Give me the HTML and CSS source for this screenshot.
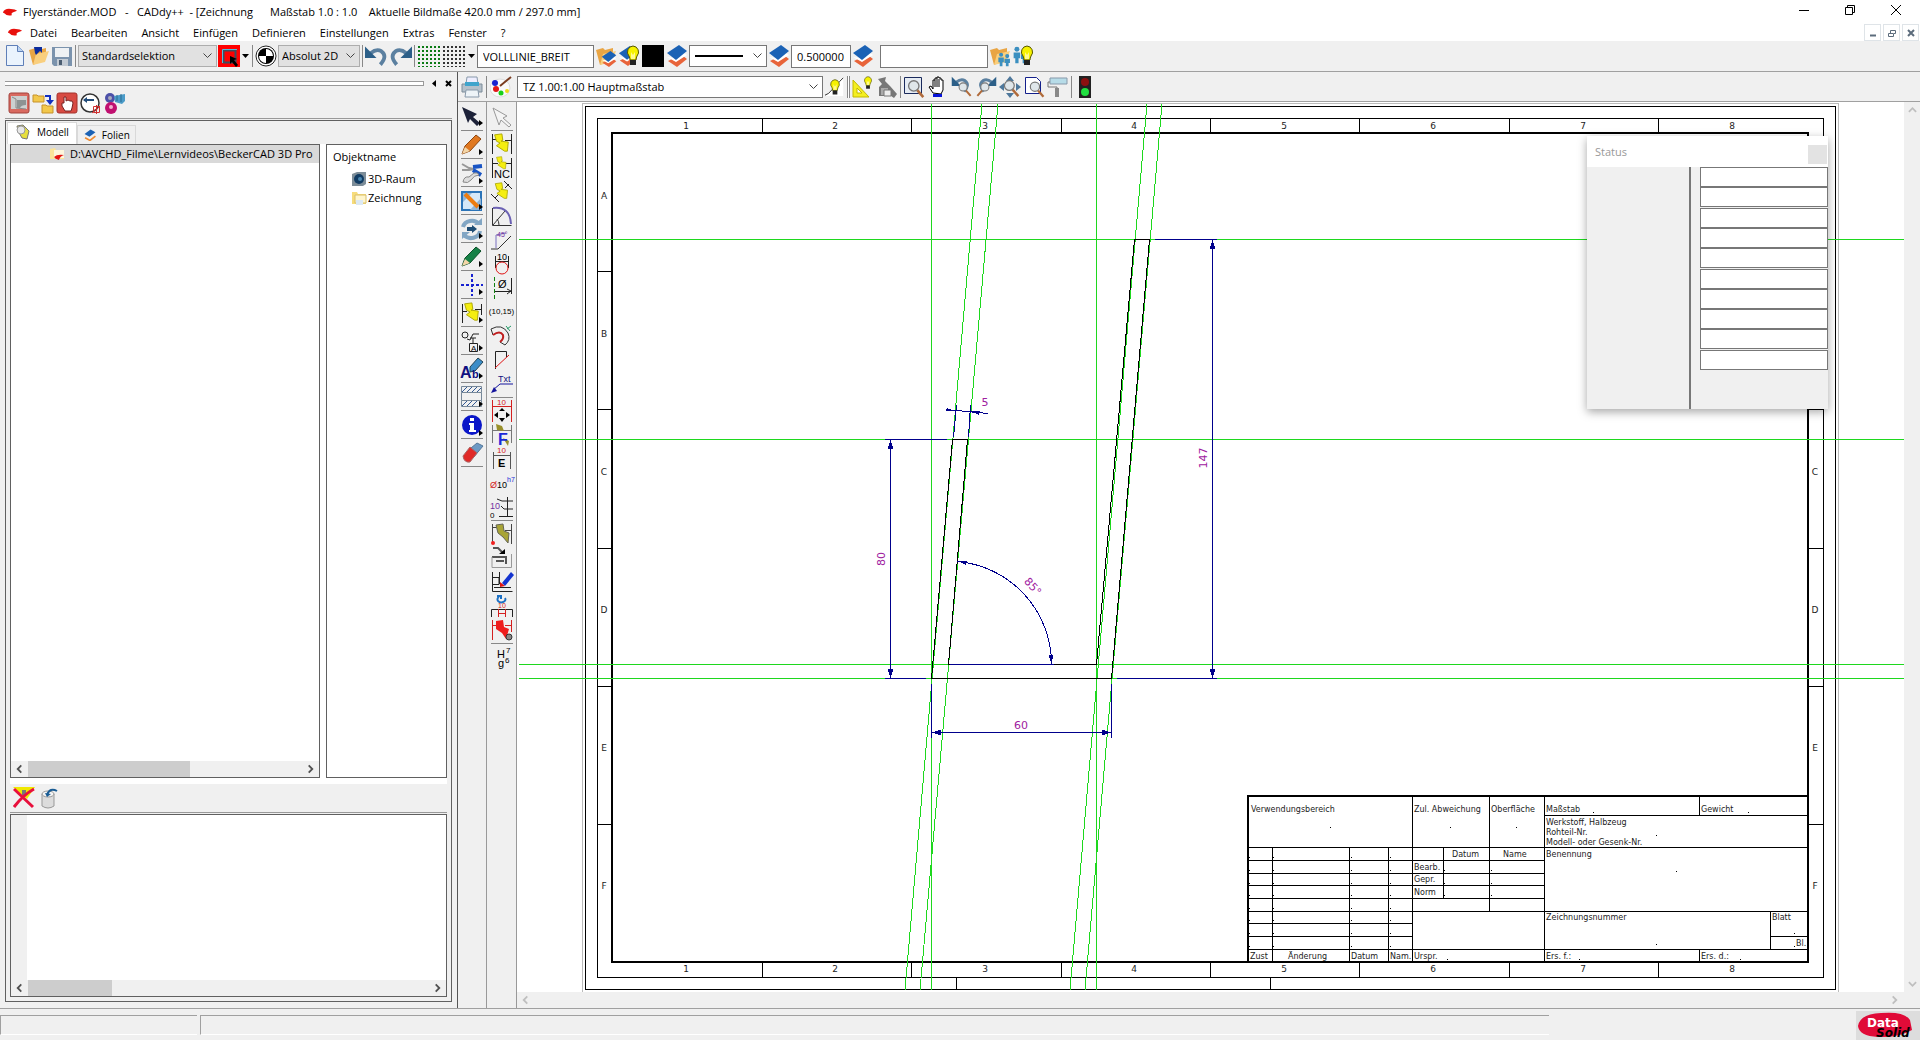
FILE: index.html
```
<!DOCTYPE html>
<html lang="de">
<head>
  <meta charset="UTF-8">
  <meta name="viewport" content="width=device-width, initial-scale=1.0">
  <title>Flyerständer.MOD - CADdy++</title>
  <link rel="stylesheet" href="styles.css">
</head>
<body>

<!-- shared symbols -->
<svg class="defs" aria-hidden="true">
  <symbol id="swoosh" viewBox="0 0 18 10"><path d="M1 5Q3 0 10 1Q15 1 17 3L12 5Q10 6 11 8Q5 9 3 6Z" fill="#e8100c"/></symbol>
  <symbol id="layer" viewBox="0 0 22 22"><path d="M2 16l9 6 10-8-4-3-8 5-3-2z" fill="#e8643a"/><path d="M1 12l9 5 11-7-3-2-9 5z" fill="#fff"/><path d="M1 8L13 0l8 6-11 9z" fill="#1b62b5"/></symbol>
  <symbol id="bulb" viewBox="0 0 14 22"><path d="M7 1a6 6 0 0 1 4 10q-1 2-1 4H4q0-2-1-4A6 6 0 0 1 7 1z" fill="#f6f200" stroke="#555500"/><path d="M4 15h6v5H4z" fill="#222"/><path d="M5 7l2 3 2-3v7H5z" fill="#fffa90"/></symbol>
  <symbol id="folder" viewBox="0 0 22 22"><path d="M1 5l7-2 2 2 8-2v11L5 20z" fill="#e9a544"/><path d="M5 20L8 9l13-3-4 11z" fill="#f9cf7e"/></symbol>
  <symbol id="glass" viewBox="0 0 22 22"><path d="M13 13l7 8" stroke="#b06a3a" stroke-width="3"/><circle cx="9" cy="8" r="6" fill="#dfe6ea" stroke="#777" stroke-width="1.5"/></symbol>
  <symbol id="flash" viewBox="0 0 22 22"><path d="M4 2l8-1 1 7-2 1 8 1-1 10-3 0-9-6 4-3-4-2z" fill="#f5ee10" stroke="#aaa500"/></symbol>
  <symbol id="undo" viewBox="0 0 24 22"><path d="M6 8Q12 3 17 6Q24 11 16 20" fill="none" stroke="#5b80a0" stroke-width="4"/><path d="M0 1v12h12z" fill="#2c5f88"/></symbol>
  <symbol id="more" viewBox="0 0 4 6"><path d="M0 0l4 3-4 3z"/></symbol>
  <symbol id="left" viewBox="0 0 10 10"><path d="M7 1L3 5l4 4" fill="none" stroke="currentColor" stroke-width="2"/></symbol>
  <symbol id="right" viewBox="0 0 10 10"><path d="M3 1l4 4-4 4" fill="none" stroke="currentColor" stroke-width="2"/></symbol>
  <symbol id="persons" viewBox="0 0 22 22"><g fill="#3b8fc0"><circle cx="6" cy="4" r="3"/><path d="M2 8h8v7H8v6H4v-6H2z"/><circle cx="15" cy="6" r="3"/><path d="M11 10h8v6h-2v5h-4v-5h-2z"/></g></symbol>
</svg>

<header class="titlebar">
  <svg class="logo"><use href="#swoosh"/></svg>
  <h1>Flyerständer.MOD   -   CADdy++  - [Zeichnung      Maßstab 1.0 : 1.0    Aktuelle Bildmaße 420.0 mm / 297.0 mm]</h1>
  <div class="window-buttons">
    <button aria-label="Minimieren"><svg width="12" height="12"><path d="M1 6.500h10" stroke="#000"/></svg></button>
    <button aria-label="Verkleinern"><svg width="12" height="12"><path d="M1.500 3.500h7v7h-7zM3.500 3V1.500h7v7H9" fill="none" stroke="#000"/></svg></button>
    <button aria-label="Schließen"><svg width="12" height="12"><path d="M1 1l10 10M11 1L1 11" stroke="#000"/></svg></button>
  </div>
</header>

<nav class="menubar">
  <svg class="logo"><use href="#swoosh"/></svg>
  <a href="#">Datei</a>
  <a href="#">Bearbeiten</a>
  <a href="#">Ansicht</a>
  <a href="#">Einfügen</a>
  <a href="#">Definieren</a>
  <a href="#">Einstellungen</a>
  <a href="#">Extras</a>
  <a href="#">Fenster</a>
  <a href="#">?</a>
  <div class="child-buttons">
    <button aria-label="Fenster minimieren"><svg width="10" height="10"><path d="M2 7.500h6" stroke="#5c6c7c" stroke-width="2"/></svg></button>
    <button aria-label="Fenster verkleinern"><svg width="10" height="10"><path d="M1.500 5.500h5v3h-5zM3.500 5V2.500h5v3H7" fill="none" stroke="#5c6c7c"/></svg></button>
    <button aria-label="Fenster schließen"><svg width="10" height="10"><path d="M2 2l6 6M8 2L2 8" stroke="#5c6c7c" stroke-width="2"/></svg></button>
  </div>
</nav>

<div class="toolbar toolbar-main">
  <button class="tool" aria-label="Neu"><svg viewBox="0 0 22 22"><path d="M1.500.500h11l6 6v14h-17z" fill="#eaf3fd" stroke="#5f7fb8"/><path d="M12.500.500v6h6" fill="#bcd4f2" stroke="#5f7fb8"/></svg></button>
  <button class="tool" aria-label="Öffnen"><svg viewBox="0 0 22 22"><use href="#folder"/><path d="M7 8L6 2h8v6l-2-2-4 4z" fill="#0c2c9c"/></svg></button>
  <button class="tool" aria-label="Speichern"><svg viewBox="0 0 22 22"><path d="M1 2h20v19H3l-2-2z" fill="#7b93ad"/><path d="M4 3h14v9H4z" fill="#eef1f4"/><path d="M6 14h11v7H6z" fill="#c3cbd4"/><path d="M8 15h3v5H8z" fill="#4c5e72"/></svg></button>
  <span class="sep"></span>
  <select class="combo combo-selection" aria-label="Selektion"><option>Standardselektion</option></select>
  <button class="tool" aria-label="Auswahlrahmen"><svg viewBox="0 0 22 22"><path d="M0 0h22v22H0z" fill="#f00"/><path d="M5.500 5.500h12v12h-12z" fill="none" stroke="#3a5060" stroke-width="2"/><path d="M4.500 18V4.500H19" fill="none" stroke="#5bd"/><path d="M12 11l7 3-3 1 4 5-2 2-4-5-2 2z"/></svg></button>
  <button class="caret" aria-label="Auswahl"><svg width="7" height="5"><path d="M0 0h7L3.500 4z"/></svg></button>
  <span class="sep"></span>
  <button class="tool" aria-label="Koordinaten"><svg viewBox="0 0 22 22"><circle cx="11" cy="11" r="10" fill="#fff" stroke="#222"/><circle cx="11" cy="11" r="8"/><path d="M11 11V4A7 7 0 0 1 18 11zM11 11v7a7 7 0 0 1-7-7z" fill="#fff"/></svg></button>
  <select class="combo combo-mode" aria-label="Koordinatenmodus"><option>Absolut 2D</option></select>
  <span class="sep"></span>
  <button class="tool wide" aria-label="Rückgängig"><svg viewBox="0 0 24 22"><use href="#undo"/></svg></button>
  <button class="tool wide flip" aria-label="Wiederholen"><svg viewBox="0 0 24 22"><use href="#undo"/></svg></button>
  <span class="sep"></span>
  <button class="grid-button grid-green" aria-label="Raster"></button>
  <button class="grid-button" aria-label="Fangraster"></button>
  <button class="caret" aria-label="Rasterauswahl"><svg width="7" height="5"><path d="M0 0h7L3.500 4z"/></svg></button>
  <input class="field field-line" type="text" value="VOLLLINIE_BREIT" aria-label="Linienart">
  <button class="tool" aria-label="Folie wählen"><svg viewBox="0 0 22 22"><use href="#folder"/><use href="#layer" x="6" y="6" width="16" height="16"/></svg></button>
  <button class="tool" aria-label="Folie sichtbar"><svg viewBox="0 0 22 22"><use href="#layer" width="20" height="22"/><use href="#bulb" x="8" width="14" height="22"/></svg></button>
  <button class="tool swatch" aria-label="Farbe"></button>
  <button class="tool" aria-label="Farbe aus Folie"><svg viewBox="0 0 22 22"><use href="#layer"/></svg></button>
  <select class="combo combo-line" aria-label="Strichart"><option></option></select>
  <button class="tool" aria-label="Strichart aus Folie"><svg viewBox="0 0 22 22"><use href="#layer"/></svg></button>
  <input class="field field-width" type="text" value="0.500000" aria-label="Strichbreite">
  <button class="tool" aria-label="Breite aus Folie"><svg viewBox="0 0 22 22"><use href="#layer"/></svg></button>
  <input class="field field-group" type="text" aria-label="Gruppe">
  <button class="tool" aria-label="Gruppe wählen"><svg viewBox="0 0 22 22"><use href="#folder"/><use href="#persons" x="8" y="7" width="15" height="15"/></svg></button>
  <button class="tool" aria-label="Gruppe sichtbar"><svg viewBox="0 0 22 22"><use href="#persons" width="18" height="20"/><use href="#bulb" x="8" width="14" height="22"/></svg></button>
</div>

<main class="workspace">
  <aside class="dock">
    <div class="grip">
      <span class="grip-line"></span>
      <button aria-label="Einklappen"><svg width="5" height="7"><path d="M4 0v7L0 3.500z"/></svg></button>
      <button aria-label="Leiste schließen"><svg width="7" height="7"><path d="M1 1l5 5M6 1L1 6" stroke="#000" stroke-width="2"/></svg></button>
    </div>
    <div class="dock-tools">
      <button class="tool" aria-label="Bauteil"><svg viewBox="0 0 22 22"><rect x="1" y="1" width="20" height="20" rx="2" fill="#d96a60" stroke="#a3423c"/><path d="M3 4h16v13H3z" fill="#ccd0d0"/><path d="M4 5l4 2v9l10 1" fill="none" stroke="#888"/><path d="M9 8h9v5q-5 0-6 3H9z" fill="#8d9393"/></svg></button>
      <button class="tool" aria-label="Ordner tauschen"><svg viewBox="0 0 22 22"><path d="M1 3h4l1 1h6v6H1zM10 13h4l1 1h6v7H10z" fill="#f2c84c" stroke="#c6922a"/><path d="M13 4h5v5" fill="none" stroke="#1230c0" stroke-width="2"/><path d="M14 8h8l-4 5z" fill="#1230c0"/></svg></button>
      <button class="tool" aria-label="Hand"><svg viewBox="0 0 22 22"><rect x="1" y="1" width="20" height="20" rx="2" fill="#d84a42" stroke="#a3322c"/><path d="M6 11l2 0V5h2v4l2-1 2 1 2 0 1 2-1 5-1 3H9l-3-5z" fill="#fff" stroke="#722"/></svg></button>
      <button class="tool" aria-label="Drehen"><svg viewBox="0 0 22 22"><circle cx="10" cy="11" r="9" fill="#fff" stroke="#333" stroke-width="1.500"/><path d="M4 8h10" stroke="#234d7a" stroke-width="2"/><path d="M3 8l4-3v6z" fill="#234d7a"/><path d="M13.500 14.500h6v6h-6zM12 21l8-7M16.500 13v9" fill="none" stroke="#d03030"/></svg></button>
      <button class="tool" aria-label="Baugruppe"><svg viewBox="0 0 22 22"><circle cx="6" cy="6" r="5" fill="#4c50a8"/><circle cx="7" cy="16" r="6" fill="#c01070"/><circle cx="7" cy="15" r="2" fill="#f4b0d0"/><circle cx="6" cy="6" r="2" fill="#aab"/><path d="M10 4l11-2v7l-3 3-7-2z" fill="#4b9bc8"/><path d="M13 3v6M17 2v8" stroke="#2a6a90"/></svg></button>
    </div>
    <div class="dock-box">
      <div class="tabs">
        <button class="tab active"><svg width="16" height="16"><path d="M2 2l6-1 6 6-2 8-5-1-4-7z" fill="#e6df3c" stroke="#777"/><circle cx="6" cy="6" r="4" fill="#e7e7e7" stroke="#999"/></svg>Modell</button>
        <button class="tab"><svg width="12" height="12" viewBox="0 0 22 22"><path d="M2 16l9 5 10-8" fill="none" stroke="#ee8a30" stroke-width="3"/><path d="M1 9L12 1l9 5-11 8z" fill="#1b62b5"/></svg>Folien</button>
      </div>
      <div class="lists">
        <div class="list tree">
          <div class="tree-row"><svg width="16" height="14"><path d="M1 2l5-1 1 2h8v9H1z" fill="#fbe49a"/><path d="M5 3h10v8H5z" fill="#fdf6dc"/><path d="M5 10q3-3 10-2-4 1-5 5-4-1-5-3z" fill="#e31414"/></svg>D:\AVCHD_Filme\Lernvideos\BeckerCAD 3D Pro</div>
          <div class="list-space"></div>
          <div class="scroll-x">
            <button aria-label="Nach links"><svg><use href="#left"/></svg></button>
            <div class="track"><span class="thumb thumb-tree"></span></div>
            <button aria-label="Nach rechts"><svg><use href="#right"/></svg></button>
          </div>
        </div>
        <div class="list objects">
          <p>Objektname</p>
          <ul>
            <li><svg width="16" height="16"><path d="M1 3l5-2h9v12l-3 2H1z" fill="#7d8d98"/><circle cx="8" cy="8" r="5" fill="#123c63"/><circle cx="9" cy="8" r="2" fill="#4b87b0"/></svg>3D-Raum</li>
            <li><svg width="16" height="16"><path d="M1 2h5l1 2h8v10H1z" fill="#f7dc7a"/><path d="M4 5h11v8H4z" fill="#fff5cc" stroke="#d9bf6a"/><path d="M5 10h7v5H5z" fill="#dce9f4"/></svg>Zeichnung</li>
          </ul>
        </div>
      </div>
      <div class="message-tools">
        <button class="tool" aria-label="Auswahl löschen"><svg viewBox="0 0 22 22"><path d="M0 0h22l-8 12z" fill="#f0e800"/><path d="M9 3h4v5H9z" fill="#777"/><path d="M1 2l19 18M21 2Q10 8 1 20" stroke="#e8103c" stroke-width="3" fill="none"/></svg></button>
        <button class="tool" aria-label="Leeren"><svg viewBox="0 0 22 22"><path d="M2 7v12q6 4 12 0V7z" fill="#dcdcdc" stroke="#999"/><ellipse cx="8" cy="7" rx="6" ry="3" fill="#f5f5f5" stroke="#999"/><path d="M17 4q-7-4-10 4" fill="none" stroke="#1a5c94" stroke-width="2"/><path d="M5 6l6 1-4 3z" fill="#1a5c94"/></svg></button>
      </div>
      <div class="list messages">
        <div class="gutter"></div>
        <div class="scroll-x">
          <button aria-label="Meldungen nach links"><svg><use href="#left"/></svg></button>
          <div class="track"><span class="thumb thumb-messages"></span></div>
          <button aria-label="Meldungen nach rechts"><svg><use href="#right"/></svg></button>
        </div>
      </div>
    </div>
  </aside>

  <section class="editor">
    <div class="toolbar toolbar-view">
      <button class="tool" aria-label="Drucken"><svg viewBox="0 0 22 22"><path d="M6 1h10l1 7H5z" fill="#eef" stroke="#89a"/><path d="M1 8h20v8H1z" fill="#b4c0ca" stroke="#7c8c99"/><path d="M4 6h14v4H4z" fill="#3fa4cc"/><path d="M5 14h12l1 7H4z" fill="#eef4f8" stroke="#89a"/></svg></button>
      <span class="sep spaced"></span>
      <button class="tool" aria-label="Farben"><svg viewBox="0 0 22 22"><ellipse cx="10" cy="12" rx="10" ry="9" fill="#fafafa" stroke="#ddd"/><circle cx="5" cy="7" r="3" fill="#1822d0"/><circle cx="6" cy="13" r="3" fill="#e01818"/><circle cx="11" cy="17" r="2.500" fill="#18d018"/><circle cx="17" cy="15" r="2" fill="#eeda18"/><path d="M10 10l11-9" stroke="#7a3c20" stroke-width="2"/></svg></button>
      <select class="combo combo-scale" aria-label="Teilzeichnung"><option>TZ 1.00:1.00 Hauptmaßstab</option></select>
      <button class="tool light" aria-label="Licht"><svg viewBox="0 0 22 22"><path d="M1 21l4-5L16 3l4-2v20z" fill="#fff"/><path d="M0 20l4-2L16 5l4-4" fill="none" stroke="#222"/><use href="#bulb" x="5" y="2" width="12" height="19"/></svg></button>
      <span class="sep double"></span>
      <button class="tool" aria-label="Winkel"><svg viewBox="0 0 22 22"><path d="M1 4v17h16z" fill="#f4ee20" stroke="#c2b800"/><path d="M5 12v5h5z" fill="#fff" stroke="#c2b800"/><use href="#bulb" x="11" width="10" height="14"/></svg></button>
      <button class="tool" aria-label="Schablone"><svg viewBox="0 0 22 22"><path d="M2 3l8-2-1 4 5 5 7 8-3 4-6-4-3 2H3v-9l3-3z" fill="#777"/><path d="M5 12h7v7H5z" fill="#aaa"/><path d="M8 14h7v6H8z" fill="#eee" stroke="#777"/></svg></button>
      <span class="sep"></span>
      <button class="tool" aria-label="Zoomfenster"><svg viewBox="0 0 22 22"><path d="M1.500 1.500h17v16h-17z" fill="#e5ebf2" stroke="#1a2a5c"/><use href="#glass" x="3" y="3" width="19" height="19"/></svg></button>
      <button class="tool" aria-label="Verschieben"><svg viewBox="0 0 22 22"><path d="M6 17l-4-6 2-1 2 3V4h2V2h2V1h2v1h2v2h2v10l-2 4z" fill="#fff" stroke="#000"/><path d="M8 4v7M10 2v9M12 3v8" stroke="#000"/><path d="M6 18h9v3H6z" fill="#0814d8"/></svg></button>
      <button class="tool" aria-label="Zoom zurück"><svg viewBox="0 0 22 22"><use href="#undo" width="20" height="17"/><use href="#glass" x="6" y="5" width="15" height="16"/></svg></button>
      <button class="tool flip" aria-label="Zoom vor"><svg viewBox="0 0 22 22"><use href="#undo" width="20" height="17"/><use href="#glass" x="6" y="5" width="15" height="16"/></svg></button>
      <button class="tool" aria-label="Alles zeigen"><svg viewBox="0 0 22 22"><path d="M11 0l4 5H7zM11 22l4-5H7zM0 11l5-4v8zM22 11l-5-4v8z" fill="#4e789c"/><use href="#glass" x="3" y="3" width="18" height="18"/></svg></button>
      <button class="tool" aria-label="Blatt zeigen"><svg viewBox="0 0 22 22"><path d="M2.500 1.500h11l4 4v12h-15z" fill="#fff" stroke="#14208c"/><use href="#glass" x="5" y="4" width="17" height="18"/></svg></button>
      <button class="tool" aria-label="Neu zeichnen"><svg viewBox="0 0 22 22"><path d="M3 2h17v6H3z" fill="#b7dce8" stroke="#89a"/><path d="M3 6H1v5h9v3" fill="none" stroke="#777"/><path d="M8 12h4v9H8z" fill="#888"/></svg></button>
      <span class="sep"></span>
      <button class="tool" aria-label="Ampel"><svg viewBox="0 0 22 22"><path d="M5 0h12v22H5z" fill="#222"/><circle cx="11" cy="6" r="4" fill="#8c1010"/><circle cx="11" cy="16" r="4" fill="#20e040"/></svg></button>
    </div>

    <div class="editor-body">
      <div class="palette palette-main">
        <button aria-label="Selektieren"><svg viewBox="0 0 22 22"><path d="M1 1l15 7-4 3 7 6-3 3-7-7-2 4z" fill="#1c2138"/><use href="#more" x="18" y="14" width="4" height="6"/></svg></button>
        <button aria-label="Zeichnen"><svg viewBox="0 0 22 22"><path d="M1 20l3-8L15 1l5 4L9 17z" fill="#e07820" stroke="#8c4610"/><path d="M1 20l3-7 5 4z" fill="#f3d6a8"/><use href="#more" x="18" y="15" width="4" height="6"/></svg></button>
        <button aria-label="Ändern"><svg viewBox="0 0 22 22"><path d="M1 2l7 4 5 1M1 8l7 0 5-1" fill="none" stroke="#999" stroke-width="2"/><path d="M12 5l9-1M12 8l8 5" stroke="#1854c4" stroke-width="4"/><path d="M2 20q1-6 6-5l5-4q4-1 5 2-5 0-8 5-3 4-8 2z" fill="#ddd" stroke="#888"/><use href="#more" x="18" y="16" width="4" height="6"/></svg></button>
        <button aria-label="Konstruktion"><svg viewBox="0 0 22 22"><path d="M1 2h19v18H1z" fill="#d5e8f8" stroke="#2b74b8" stroke-width="2"/><path d="M2 3h9l-9 9zM20 8v12H9z" fill="#8fb4d6"/><path d="M4 4l13 13" stroke="#ec7c10" stroke-width="4"/><use href="#more" x="18" y="14" width="4" height="6"/></svg></button>
        <button aria-label="Transformieren"><svg viewBox="0 0 22 22"><path d="M2 9a9 8 0 0 1 16-3M19 13a9 8 0 0 1-16 4" fill="none" stroke="#82a6c4" stroke-width="4"/><path d="M13 7h8V0zM1 21v-7h8z" fill="#82a6c4"/><path d="M6 9h5V7l5 4-5 4v-2H6z" fill="#1d4c74"/><use href="#more" x="18" y="15" width="4" height="6"/></svg></button>
        <button aria-label="Markieren"><svg viewBox="0 0 22 22"><path d="M1 20l3-8L15 1l5 4L9 17z" fill="#158046" stroke="#0b5028"/><path d="M1 20l3-7 5 4z" fill="#f3d6a8"/><use href="#more" x="18" y="15" width="4" height="6"/></svg></button>
        <button aria-label="Punkte"><svg viewBox="0 0 22 22"><path d="M0 11h22M11 0v22" stroke="#1822d0" stroke-width="2" stroke-dasharray="3 2"/><use href="#more" x="18" y="15" width="4" height="6"/></svg></button>
        <button aria-label="Bemaßung"><svg viewBox="0 0 22 22"><path d="M1.500 2v19M20.500 2v11M1 9.500h5M14 7.500h6" stroke="#222"/><use href="#flash" width="20" height="20"/><use href="#more" x="18" y="15" width="4" height="6"/></svg></button>
        <button aria-label="Symbole"><svg viewBox="0 0 22 22"><circle cx="4" cy="5" r="3" fill="none" stroke="#222"/><path d="M6 9l3 1 3-6h6M12 8v5M9 8h6" fill="none" stroke="#222"/><path d="M8.500 13.500h8v8h-8z" fill="none" stroke="#222"/><text x="10" y="21" class="t8">A</text><use href="#more" x="18" y="15" width="4" height="6"/></svg></button>
        <button aria-label="Text"><svg viewBox="0 0 22 22"><text x="-1" y="20" class="t15 navy">A</text><path d="M9 9l8-9 5 4-8 9-5 1z" fill="#3b8dc8" stroke="#245"/><text x="11" y="20" class="t10 navy">b</text><use href="#more" x="18" y="15" width="4" height="6"/></svg></button>
        <button aria-label="Schraffur"><svg viewBox="0 0 22 22"><path d="M.500.500h20v6H.500zM.500 14.500h20v6H.500zM.500 6.500v8M20.500 6.500v8" fill="none" stroke="#789"/><path d="M1 6l5-5M6 6l5-5M11 6l5-5M16 6l4-4M1 20l5-5M6 20l5-5M11 20l5-5" stroke="#345a94"/><use href="#more" x="18" y="15" width="4" height="6"/></svg></button>
        <button aria-label="Information"><svg viewBox="0 0 22 22"><circle cx="11" cy="11" r="10" fill="#0a16c8"/><path d="M9 4h4v3H9zM8 9h5v7h2v2H8v-2h1v-5H8z" fill="#fff"/><use href="#more" x="18" y="16" width="4" height="6"/></svg></button>
        <button aria-label="Radieren"><svg viewBox="0 0 22 22"><path d="M10 6l6-5 6 3-10 12z" fill="#6d9ac4" stroke="#579"/><path d="M2 14l7-9 7 6-7 9q-6 1-7-6z" fill="#e02a28" stroke="#a66"/></svg></button>
      </div>

      <div class="palette palette-dims">
        <button aria-label="Auswahl"><svg viewBox="0 0 22 22"><path d="M2 2l14 8-4 2 8 7-2 2-8-7-2 5z" fill="#f4f4f4" stroke="#999"/></svg></button>
        <span class="rule"></span>
        <button aria-label="Maß"><svg viewBox="0 0 22 22"><path d="M1.500 1v20M20.500 1v20M1 6.500h6M14 7.500h6" stroke="#222"/><use href="#flash" width="20" height="20"/></svg></button>
        <button aria-label="NC-Maß"><svg viewBox="0 0 22 22"><path d="M1.500 1v20M20.500 1v20M1 6.500h6M14 6.500h6" stroke="#222"/><use href="#flash" x="2" y="-1" width="16" height="14"/><text x="3" y="21" class="t11">NC</text></svg></button>
        <button aria-label="Schrägmaß"><svg viewBox="0 0 22 22"><path d="M13 0l8 8M0 13l8 8M18 3l-4 4M4 17l4-4" stroke="#222"/><use href="#flash" x="1" y="0" width="18" height="20"/></svg></button>
        <button aria-label="Winkelmaß"><svg viewBox="0 0 22 22"><path d="M1.500 3v17.500h19M2 20L14 6M8 20q0-4-2-6" fill="none" stroke="#333"/><path d="M2 3q17-2 18 16" fill="none" stroke="#6c62b4" stroke-width="2"/></svg></button>
        <button aria-label="Fase"><svg viewBox="0 0 22 22"><path d="M0 20h7L20 7" fill="none" stroke="#333"/><path d="M5 19V6l10-2" fill="none" stroke="#7a70c0"/><text x="6" y="8" class="t7 violet">45°</text></svg></button>
        <button aria-label="Durchmesser"><svg viewBox="0 0 22 22"><text x="6" y="7" class="t9">10</text><path d="M4.500 3v12M17.500 3v12M4 8.500h14" stroke="#222"/><circle cx="11" cy="15" r="6" fill="none" stroke="#e01414"/></svg></button>
        <button aria-label="Durchmesser linear"><svg viewBox="0 0 22 22"><path d="M3.500 0v22" stroke="#108010" stroke-dasharray="4 2"/><text x="7" y="11" class="t11">Ø</text><path d="M20.500 1v16M4 14.500h16M16 12l4 2-4 3" fill="none" stroke="#222"/></svg></button>
        <button class="text-tool" aria-label="Koordinatenmaß">(10,15)</button>
        <button aria-label="Bogenmaß"><svg viewBox="0 0 22 22"><path d="M0 4Q11-2 17 8Q20 15 14 20l-5-3M0 4l2 6" fill="none" stroke="#333"/><path d="M2 10Q9 5 12 10Q13 14 9 17" fill="none" stroke="#c02020" stroke-width="2"/><path d="M16 4l4-3M15 1l4 5" stroke="#296"/></svg></button>
        <button aria-label="Kegelmaß"><svg viewBox="0 0 22 22"><path d="M4.500 20V2.500h11V8" fill="none" stroke="#222"/><path d="M4 19L18 6" stroke="#e01414"/></svg></button>
        <button aria-label="Hinweistext"><svg viewBox="0 0 22 22"><text x="7" y="9" class="t9 navy">Txt</text><path d="M2 17l7-6h13" fill="none" stroke="#14149c"/><path d="M0 20l3-6 3 4z" fill="#14149c"/></svg></button>
        <span class="rule"></span>
        <button aria-label="Maß verschieben"><svg viewBox="0 0 22 22"><path d="M1.500 0v22M20.500 0v22M1 6.500h20" stroke="#d42020"/><text x="6" y="5" class="t8 red">10</text><path d="M11 8l3 3H8zM11 22l3-4H8zM3 15l4-3v6zM19 15l-4-3v6z"/></svg></button>
        <button aria-label="Maß formatieren"><svg viewBox="0 0 22 22"><path d="M1.500 1v18M20.500 1v18M1 6.500h19" stroke="#777"/><path d="M5 0l6 2 2 5-7-1zM12 14l6 3-1 5z" fill="#98902c"/><text x="7" y="21" class="t15 blue">F</text></svg></button>
        <button aria-label="Maß editieren"><svg viewBox="0 0 22 22"><text x="6" y="5" class="t8 red">10</text><path d="M2.500 4v17M19.500 4v17M3 7.500h16" stroke="#555"/><text x="7" y="19" class="t11 bold">E</text></svg></button>
        <button aria-label="Passung h7"><svg viewBox="0 0 22 22"><text x="-1" y="16" class="t9 red">Ø</text><text x="6" y="16" class="t9">10</text><text x="16" y="10" class="t7 blue">h7</text></svg></button>
        <button aria-label="Staffelmaß"><svg viewBox="0 0 22 22"><text x="-1" y="13" class="t9 violet">10</text><text x="-1" y="22" class="t8">0</text><path d="M6 3l5 2h11M10 10l3 3h9M8 20.500h14M16.500 1v20" fill="none" stroke="#222"/></svg></button>
        <span class="rule"></span>
        <button aria-label="Maß anhängen"><svg viewBox="0 0 22 22"><path d="M1.500 1v20M20.500 1v20M1 4.500h6M14 7.500h6" stroke="#444"/><path d="M5 2l7-1 1 7 5 2-1 10-5-6-5-4z" fill="#a8a436" stroke="#665"/><circle cx="2" cy="20" r="2" fill="#f02020"/></svg></button>
        <button aria-label="Maß einfügen"><svg viewBox="0 0 22 22"><path d="M2 1h5l4 4M1 10h14v7M5 14h8" fill="none" stroke="#555" stroke-width="2"/><path d="M8 7h6V2z"/><path d="M20.500 7v13.500H1V10" fill="none" stroke="#999"/></svg></button>
        <button aria-label="Maß bearbeiten"><svg viewBox="0 0 22 22"><path d="M1.500 1v19.500h20M1 6.500h7v7H1M8.500 1v12M3 16.500h17" fill="none" stroke="#222"/><path d="M11 12L20 1l3 3-9 11z" fill="#1434d0"/><path d="M9 11l5 4-5 1z" fill="#e01414"/></svg></button>
        <button aria-label="Maß drehen"><svg viewBox="0 0 22 22"><path d="M8 2a4 3 0 1 0 6 1M6 1h4v3" fill="none" stroke="#1c70c4" stroke-width="2"/><path d="M.500 22v-7.500h21V22" fill="none" stroke="#222"/><text x="7" y="13" class="t7 red">10</text><path d="M7.500 14v8M14.500 14v8M7 18.500h7" fill="none" stroke="#d42020"/></svg></button>
        <button aria-label="Maß auflösen"><svg viewBox="0 0 22 22"><path d="M1.500 1v20M20.500 1v12M1 6.500h6M14 6.500h6" stroke="#d42020"/><path d="M5 2l7-1 1 7 5 2-3 10-4-6-6-4z" fill="#ee1c1c"/><circle cx="18" cy="18" r="3" fill="#888" stroke="#333"/></svg></button>
        <span class="rule"></span>
        <button aria-label="Passung H7 g6"><svg viewBox="0 0 22 22"><text x="6" y="12" class="t11">H</text><text x="15" y="7" class="t8">7</text><text x="7" y="21" class="t11">g</text><text x="14" y="17" class="t8">6</text></svg></button>
      </div>

      <div class="canvas">
        <svg class="drawing" viewBox="517 102 1387 890">
          <!-- sheet frames -->
          <path class="sheet" d="M582.500 992V103.500h1256V992"/>
          <g class="thin">
            <rect x="585.500" y="106.500" width="1250" height="883"/>
            <rect x="597.500" y="118.500" width="1226" height="859"/>
            <path d="M762.500 118v15M911.500 118v15M1061.500 118v15M1210.500 118v15M1359.500 118v15M1509.500 118v15M1658.500 118v15"/>
            <path d="M762.500 962v15M911.500 962v15M1061.500 962v15M1210.500 962v15M1359.500 962v15M1509.500 962v15M1658.500 962v15M956.500 977v12M1270.500 977v12"/>
            <path d="M597 271.500h15M597 409.500h15M597 548.500h15M597 686.500h15M597 824.500h15"/>
            <path d="M1808 271.500h15M1808 409.500h15M1808 548.500h15M1808 686.500h15M1808 824.500h15"/>
          </g>
          <rect class="thick" x="612" y="133" width="1196" height="829"/>
          <g class="zone">
            <text x="686" y="129">1</text><text x="835" y="129">2</text><text x="985" y="129">3</text><text x="1134" y="129">4</text><text x="1284" y="129">5</text><text x="1433" y="129">6</text><text x="1583" y="129">7</text><text x="1732" y="129">8</text>
            <text x="686" y="972">1</text><text x="835" y="972">2</text><text x="985" y="972">3</text><text x="1134" y="972">4</text><text x="1284" y="972">5</text><text x="1433" y="972">6</text><text x="1583" y="972">7</text><text x="1732" y="972">8</text>
            <text x="604" y="199">A</text><text x="604" y="337">B</text><text x="604" y="475">C</text><text x="604" y="613">D</text><text x="604" y="751">E</text><text x="604" y="889">F</text>
            <text x="1815" y="475">C</text><text x="1815" y="613">D</text><text x="1815" y="751">E</text><text x="1815" y="889">F</text>
          </g>

          <!-- construction lines -->
          <g class="guide">
            <path d="M519 239.500h1385M519 439.500h1385M519 664.500h1385M519 678.500h1385"/>
            <path d="M931.500 104v886M1096.500 104v886"/>
            <path d="M982 104L905 990M998 104L920 990M1147 104L1070 990M1162 104L1085 990"/>
          </g>

          <!-- profile -->
          <path class="part" d="M931.500 678.500L952.500 439.500H967.500L948.500 664.500H1096.500L1134.500 239.500H1149.500L1111.500 678.500Z"/>

          <!-- dimensions -->
          <g class="dim">
            <path d="M885 439.500h62M885 678.500h41M890.500 440v238"/>
            <path d="M1155 239.500h62M1117 678.500h100M1212.500 240v438"/>
            <path d="M931.500 684v54M1111.500 684v54M932 732.500h179"/>
            <path d="M956.500 405L953.500 437M970.500 405L968.500 437M946 409.500L988 413.500"/>
            <path d="M957.500 561.500A103 103 0 0 1 1051.500 664.500M950 664.500h104"/>
          </g>
          <g class="arrow">
            <path d="M890.500 440l-3 9h6zM890.500 678l-3-9h6zM1212.500 240l-3 9h6zM1212.500 678l-3-9h6z"/>
            <path d="M932 732.500l9-3v6zM1111 732.500l-9-3v6z"/>
            <path d="M958 561l9 0-1 4zM1051.500 664l-3-9h5z"/>
            <path d="M955 411l-8-3-1 3zM971 411l9 0-1 4z"/>
          </g>
          <g class="value">
            <text x="985" y="406">5</text>
            <text x="1021" y="729">60</text>
            <text transform="translate(885 559) rotate(-90)">80</text>
            <text transform="translate(1207 458) rotate(-90)">147</text>
            <text transform="translate(1030 589) rotate(48)">85°</text>
          </g>

          <!-- title block -->
          <path class="thick" d="M1808 796H1248V962"/>
          <g class="thin">
            <path d="M1544 815.500h264M1248 847.500h560M1248 860.500h296M1248 873.500h296M1248 885.500h296M1248 898.500h296M1248 911.500h560M1248 923.500h164M1248 936.500h164M1770 936.500h38M1248 949.500h560"/>
            <path d="M1272.500 847v115M1349.500 847v115M1388.500 847v115M1412.500 796v166M1443.500 847v51M1489.500 796v115M1544.500 796v166M1699.500 796v19M1699.500 949v13M1770.500 911v38"/>
          </g>
          <g class="label">
            <text x="1251" y="812">Verwendungsbereich</text>
            <text x="1414" y="812">Zul. Abweichung</text>
            <text x="1491" y="812">Oberfläche</text>
            <text x="1546" y="812">Maßstab</text>
            <text x="1701" y="812">Gewicht</text>
            <text x="1546" y="825">Werkstoff, Halbzeug</text>
            <text x="1546" y="835">Rohteil-Nr.</text>
            <text x="1546" y="845">Modell- oder Gesenk-Nr.</text>
            <text x="1546" y="857">Benennung</text>
            <text x="1452" y="857">Datum</text>
            <text x="1503" y="857">Name</text>
            <text x="1414" y="870">Bearb.</text>
            <text x="1414" y="882">Gepr.</text>
            <text x="1414" y="895">Norm</text>
            <text x="1546" y="920">Zeichnungsnummer</text>
            <text x="1772" y="920">Blatt</text>
            <text x="1796" y="946">Bl.</text>
            <text x="1250" y="959">Zust</text>
            <text x="1288" y="959">Änderung</text>
            <text x="1351" y="959">Datum</text>
            <text x="1390" y="959">Nam.</text>
            <text x="1414" y="959">Urspr.</text>
            <text x="1546" y="959">Ers. f.:</text>
            <text x="1701" y="959">Ers. d.:</text>
          </g>
          <path class="dots" d="M1330 827h1M1450 827h1M1516 827h1M1593 812h1M1748 812h1M1656 835h1M1676 871h1M1656 944h1M1794 933h1M1794 946h1M1447 959h1M1579 959h1M1740 959h1
            M1249 857h1M1249 870h1M1249 883h1M1249 895h1M1249 908h1M1249 920h1M1249 933h1M1249 946h1
            M1273 857h1M1273 870h1M1273 883h1M1273 895h1M1273 908h1M1273 920h1M1273 933h1M1273 946h1
            M1351 857h1M1351 870h1M1351 883h1M1351 895h1M1351 908h1M1351 920h1M1351 933h1M1351 946h1
            M1390 857h1M1390 870h1M1390 883h1M1390 895h1M1390 908h1M1390 920h1M1390 933h1M1390 946h1
            M1444 870h1M1444 883h1M1444 895h1M1491 870h1M1491 883h1M1491 895h1"/>
        </svg>

        <div class="status-window">
          <div class="status-title"><h2>Status</h2><button aria-label="Status schließen"></button></div>
          <div class="status-body">
            <div class="status-left"></div>
            <div class="status-fields">
              <div class="field-group-box"><input type="text" aria-label="X"><input type="text" aria-label="Y"></div>
              <div class="field-group-box"><input type="text" aria-label="dX"><input type="text" aria-label="dY"><input type="text" aria-label="dZ"></div>
              <div class="field-group-box"><input type="text" aria-label="Länge"><input type="text" aria-label="Winkel"><input type="text" aria-label="Radius"><input type="text" aria-label="Abstand"></div>
              <div class="field-group-box"><input type="text" aria-label="Fang"></div>
            </div>
          </div>
        </div>
      </div>
      <div class="scroll-y">
        <button class="turn" aria-label="Nach oben"><svg><use href="#left"/></svg></button>
        <button class="turn" aria-label="Nach unten"><svg><use href="#right"/></svg></button>
      </div>
      <div class="scroll-x canvas-scroll">
        <button aria-label="Zeichnung nach links"><svg><use href="#left"/></svg></button>
        <div class="track"></div>
        <button aria-label="Zeichnung nach rechts"><svg><use href="#right"/></svg></button>
      </div>
    </div>
  </section>
</main>

<footer class="statusbar">
  <div class="cell cell-hint"></div>
  <div class="cell cell-message"></div>
  <svg class="brand" viewBox="0 0 64 29"><path d="M0 0h64v29H0z" fill="#ddd"/><path d="M2 15Q4 3 25 2Q48 0 54 9L56 19Q42 27 22 26Q3 25 2 15z" fill="#e00b38"/><text x="11" y="16" class="brand-data">Data</text><text x="20" y="26" class="brand-solid">Solid</text></svg>
</footer>

</body>
</html>
```
FILE: styles.css
```
* {
  box-sizing: border-box;
}
body {
  margin: 0;
  height: 100vh;
  display: flex;
  flex-direction: column;
  overflow: hidden;
  background: #f0f0f0;
  color: #000;
  font-family: "Open Sans", "Noto Sans", sans-serif;
  font-size: 11px;
  line-height: 16px;
}
button, input, select {
  font: inherit;
  color: inherit;
  margin: 0;
  padding: 0;
  border: 0;
  border-radius: 0;
  background: none;
}
button svg {
  display: block;
}
.defs {
  position: absolute;
  width: 0;
  height: 0;
}

/* title and menu */
.titlebar {
  display: flex;
  align-items: center;
  height: 24px;
  padding-left: 2px;
  background: #fff;
}
.titlebar h1 {
  flex: 1;
  margin: 0 0 0 5px;
  font-size: 11px;
  font-weight: normal;
  white-space: pre;
}
.logo {
  width: 16px;
  height: 9px;
}
.window-buttons {
  display: flex;
  gap: 34px;
  padding: 0 18px 4px 0;
}
.menubar {
  display: flex;
  align-items: center;
  gap: 14px;
  height: 17px;
  padding-left: 7px;
  background: #fff;
}
.menubar .logo {
  margin-right: -7px;
}
.menubar a {
  color: #000;
  text-decoration: none;
}
.child-buttons {
  display: flex;
  gap: 2px;
  margin-left: auto;
  padding-right: 1px;
}
.child-buttons button {
  width: 17px;
  height: 17px;
  padding: 3px;
  border: 1px solid #dfe4e8;
}

/* toolbars */
.toolbar {
  display: flex;
  align-items: center;
  border-bottom: 1px solid #a0a0a0;
}
.toolbar-main {
  height: 31px;
  gap: 1px;
  padding-left: 5px;
}
.toolbar-main .sep,
.sep.spaced {
  margin: 0 1px;
}
.toolbar-view {
  height: 30px;
  gap: 2px;
  padding-left: 3px;
}
.tool {
  flex: none;
  width: 22px;
  height: 22px;
}
.tool.wide {
  width: 23px;
}
.tool.light {
  width: 20px;
}
.tool svg {
  width: 100%;
  height: 100%;
}
.flip svg {
  transform: scaleX(-1);
}
.sep {
  flex: none;
  width: 1px;
  height: 22px;
  background: #888;
}
.sep.double {
  width: 3px;
  border: solid #888;
  border-width: 0 1px;
  background: #fff;
}
.caret {
  flex: none;
  width: 9px;
  height: 22px;
  padding: 0 1px;
}
.combo {
  flex: none;
  appearance: none;
  height: 22px;
  padding: 0 24px 0 3px;
  border: 1px solid #adadad;
  background: #e1e1e1 url("data:image/svg+xml,%3Csvg xmlns='http://www.w3.org/2000/svg' width='9' height='6'%3E%3Cpath d='M.5.500l4 4 4-4' fill='none' stroke='%23444'/%3E%3C/svg%3E") no-repeat right 4px center;
}
.combo-selection {
  width: 139px;
}
.combo-mode {
  width: 82px;
  padding-right: 16px;
}
.combo-line {
  width: 78px;
  border-color: #777;
  background-color: #fff;
  background-image: url("data:image/svg+xml,%3Csvg xmlns='http://www.w3.org/2000/svg' width='9' height='6'%3E%3Cpath d='M.5.500l4 4 4-4' fill='none' stroke='%23444'/%3E%3C/svg%3E"), linear-gradient(#000, #000);
  background-position: right 4px center, 5px center;
  background-size: 9px 6px, 48px 2px;
}
.combo-scale {
  width: 306px;
  margin-left: 3px;
  padding-left: 5px;
  border-color: #777;
  background-color: #fff;
}
.field {
  flex: none;
  height: 23px;
  padding: 0 5px;
  border: 1px solid #777;
  background: #fff;
}
.field-line {
  width: 117px;
}
.field-width {
  width: 60px;
}
.field-group {
  width: 108px;
  margin-left: 5px;
}
.grid-button {
  flex: none;
  width: 24px;
  height: 22px;
  background: radial-gradient(circle, #333 1px, transparent 1px) 0 0 / 4px 4px;
}
.grid-green {
  background-image: radial-gradient(circle, #0a7a14 1px, transparent 1px);
}
.swatch {
  margin: 0 1px;
  background: #000;
}

/* left dock */
.workspace {
  flex: 1;
  display: flex;
  min-height: 0;
}
.dock {
  flex: none;
  display: flex;
  flex-direction: column;
  width: 458px;
  padding: 6px 5px 6px;
  border-right: 1px solid #555;
}
.grip {
  display: flex;
  align-items: center;
  height: 10px;
  gap: 8px;
}
.grip-line {
  width: 421px;
  height: 5px;
  border: 1px solid #999;
  border-left: 0;
  background: #fff;
}
.dock-tools {
  display: flex;
  align-items: center;
  gap: 2px;
  height: 31px;
  margin-bottom: 1px;
  padding-left: 3px;
  border-bottom: 1px solid #999;
}
.dock-box {
  flex: 1;
  display: flex;
  flex-direction: column;
  min-height: 0;
  padding: 1px 4px 4px;
  border: 1px solid #606060;
}
.tabs {
  display: flex;
  align-items: flex-end;
  height: 22px;
  margin-left: -3px;
  font-size: 10px;
}
.tab {
  display: flex;
  align-items: center;
  gap: 6px;
  height: 19px;
  padding: 0 5px 0 6px;
  border: 1px solid #d9d9d9;
  border-bottom: 0;
}
.tab.active {
  height: 22px;
  padding: 0 7px 3px;
  background: #fff;
}
.lists {
  flex: 1;
  display: flex;
  gap: 6px;
  min-height: 0;
  padding-bottom: 6px;
  background: #fff;
}
.list {
  border: 1px solid #606060;
  background: #fff;
}
.tree {
  display: flex;
  flex-direction: column;
  width: 310px;
  overflow: hidden;
}
.tree-row {
  display: flex;
  align-items: center;
  gap: 5px;
  height: 18px;
  padding-left: 38px;
  background: #d9d9d9;
  white-space: nowrap;
}
.tree-row svg {
  flex: none;
}
.list-space {
  flex: 1;
}
.objects {
  flex: 1;
  padding: 4px 6px;
}
.objects p {
  margin: 0;
}
.objects ul {
  margin: 4px 0 0;
  padding: 0 0 0 18px;
  list-style: none;
}
.objects li {
  display: flex;
  align-items: center;
  gap: 1px;
  height: 19px;
}
.message-tools {
  display: flex;
  align-items: center;
  gap: 5px;
  height: 29px;
  margin-bottom: 1px;
  padding-left: 3px;
  border-bottom: 1px solid #999;
}
.messages {
  display: flex;
  flex-direction: column;
  height: 183px;
}
.gutter {
  flex: 1;
  width: 16px;
  background: #f0f0f0;
}

/* scroll bars */
.scroll-x {
  display: flex;
  height: 16px;
  background: #f0f0f0;
  color: #505050;
}
.scroll-x button,
.scroll-y button {
  width: 17px;
  height: 16px;
  padding: 3px 4px;
}
.scroll-x svg,
.scroll-y svg {
  width: 9px;
  height: 10px;
}
.track {
  flex: 1;
}
.thumb {
  display: block;
  height: 16px;
  background: #cdcdcd;
}
.thumb-tree {
  width: 59%;
}
.thumb-messages {
  width: 21%;
}
.scroll-y {
  display: flex;
  flex-direction: column;
  justify-content: space-between;
  color: #bfbfbf;
}
.scroll-y .turn svg {
  transform: rotate(90deg);
}
.canvas-scroll {
  grid-column: 3 / 5;
  color: #bfbfbf;
  padding-right: 17px;
}

/* drawing area */
.editor {
  flex: 1;
  display: flex;
  flex-direction: column;
  min-width: 0;
}
.editor-body {
  flex: 1;
  display: grid;
  grid-template-columns: 29px 30px 1fr 16px;
  grid-template-rows: 1fr 16px;
  min-height: 0;
}
.palette {
  grid-row: 1 / 3;
  display: flex;
  flex-direction: column;
  align-items: center;
  border-right: 1px solid #999;
}
.palette button {
  width: 22px;
}
.palette svg {
  width: 22px;
  height: 22px;
  overflow: visible;
}
.palette-main {
  padding-top: 1px;
}
.palette-main button {
  height: 28px;
  border-bottom: 1px solid #888;
}
.palette-dims {
  padding-top: 3px;
}
.palette-dims button {
  flex: none;
  height: 24px;
}
.rule {
  flex: none;
  width: 22px;
  height: 1px;
  margin: 1px 0 1px;
  background: #888;
}
.palette-dims .text-tool {
  display: flex;
  align-items: center;
  justify-content: center;
  font-family: "Liberation Sans", sans-serif;
  font-size: 8px;
  white-space: nowrap;
}
.canvas {
  position: relative;
  min-width: 0;
  min-height: 0;
  overflow: hidden;
  background: #fff;
}
.drawing {
  display: block;
  width: 100%;
  height: 100%;
}
.drawing path,
.drawing rect {
  fill: none;
  shape-rendering: crispEdges;
}
.drawing .sheet {
  stroke: #bbb;
}
.thin, .part {
  stroke: #000;
}
.drawing .thick {
  stroke: #000;
  stroke-width: 2;
}
.guide {
  stroke: #1ed81e;
}
.dim {
  stroke: #00008c;
}
.drawing .arrow path {
  fill: #00008c;
}
.drawing .dots {
  stroke: #000;
}
.zone, .value, .label {
  font-family: "DejaVu Sans", sans-serif;
}
.zone {
  font-size: 9px;
  fill: #222;
  text-anchor: middle;
}
.value {
  font-size: 11px;
  fill: #a020a0;
  text-anchor: middle;
}
.label {
  font-size: 8px;
  fill: #222;
}

/* icon lettering */
.palette text {
  font-family: "Liberation Sans", sans-serif;
}
.t7 { font-size: 7px; }
.t8 { font-size: 8px; }
.t9 { font-size: 9px; }
.t10 { font-size: 11px; font-weight: bold; }
.t11 { font-size: 11px; }
.t15 { font-size: 16px; font-weight: bold; }
.bold { font-weight: bold; }
.navy { fill: #101080; }
.blue { fill: #1a28d8; }
.red { fill: #d42020; }
.violet { fill: #7030a0; }

/* floating status window */
.status-window {
  position: absolute;
  top: 34px;
  right: 76px;
  width: 241px;
  background: #f0f0f0;
  box-shadow: 0 3px 9px rgba(0, 0, 0, 0.35);
}
.status-title {
  display: flex;
  align-items: center;
  justify-content: space-between;
  height: 31px;
  padding: 0 1px 0 8px;
  background: #fff;
}
.status-title h2 {
  margin: 0;
  font-size: 11px;
  font-weight: normal;
  color: #999;
}
.status-title button {
  width: 19px;
  height: 19px;
  margin-top: 5px;
  background: #e3e3e3;
}
.status-body {
  display: flex;
  height: 242px;
}
.status-left {
  width: 104px;
  border-right: 2px solid #777;
}
.status-fields {
  flex: 1;
  display: flex;
  flex-direction: column;
  gap: 1px;
  padding-left: 9px;
}
.field-group-box {
  display: flex;
  flex-direction: column;
}
.field-group-box input {
  width: 100%;
  height: 20px;
  border: 1px solid #777;
  background: #fff;
}

/* status bar */
.statusbar {
  display: flex;
  gap: 3px;
  height: 32px;
  padding-top: 2px;
  border-top: 1px solid #a0a0a0;
}
.cell {
  height: 20px;
  margin-top: 4px;
  border: solid #a0a0a0;
  border-width: 1px 0 0 1px;
  border-bottom: 1px solid #fff;
}
.cell-hint {
  width: 197px;
}
.cell-message {
  flex: 1;
  margin-right: 304px;
}
.brand {
  flex: none;
  width: 64px;
  height: 29px;
}
.brand-data {
  font: bold 12px "DejaVu Sans", sans-serif;
  fill: #fff;
}
.brand-solid {
  font: italic bold 12px "DejaVu Sans", sans-serif;
}
```
